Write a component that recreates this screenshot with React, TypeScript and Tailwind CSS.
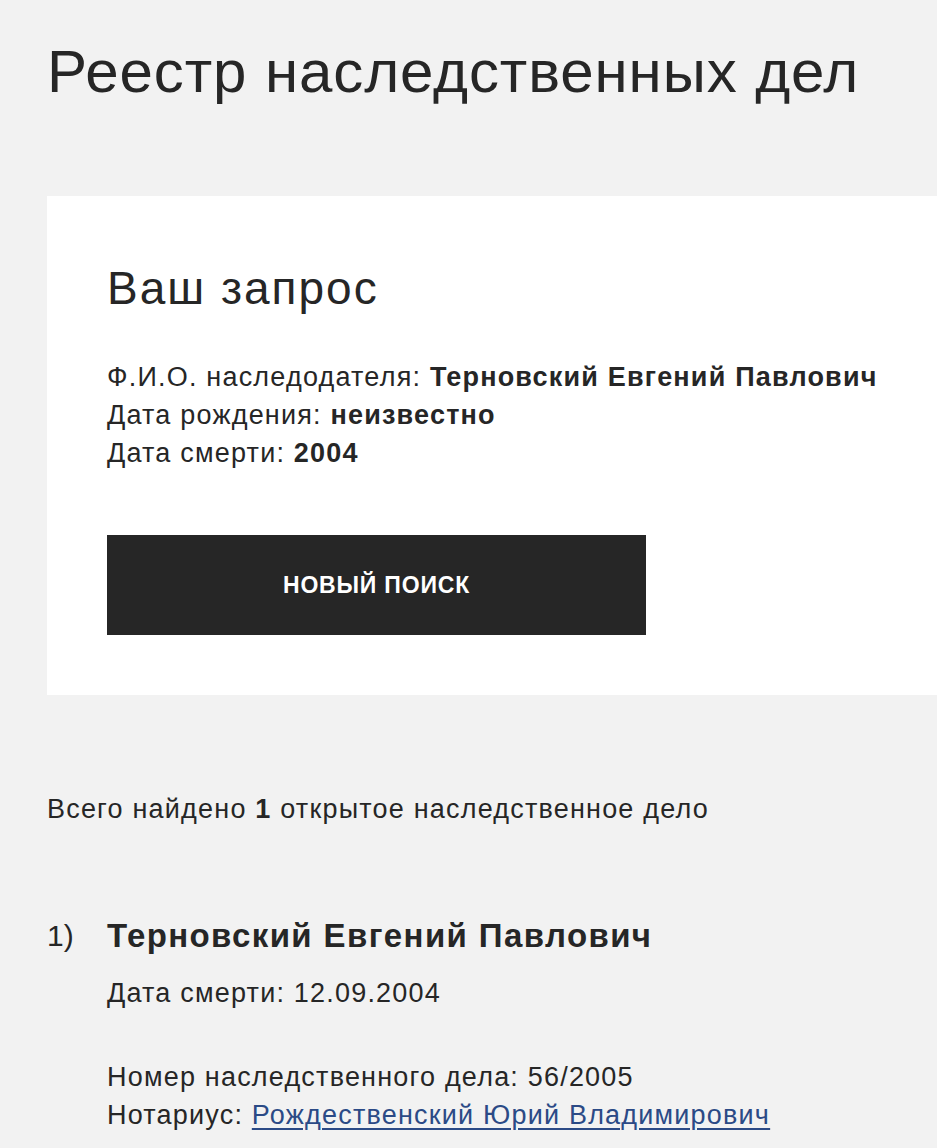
export default function App() {
  return (
    <div className="min-h-[1148px] bg-[#f2f2f2] text-[#262626] overflow-hidden" style={{ fontFamily: '"Liberation Sans", Arial, sans-serif' }}>
      <div className="pl-[47px] pt-[36px]">
        <h1 className="text-[60px] leading-[72px] font-normal whitespace-nowrap tracking-[0.9px]">Реестр наследственных дел</h1>
        <div className="mt-[88px] bg-white pl-[60px] pt-[65px] pb-[60px]">
          <h2 className="text-[46px] leading-[54px] font-normal tracking-[2px]">Ваш запрос</h2>
          <div className="mt-[43px] text-[27px] leading-[38px] tracking-[1.2px] whitespace-nowrap">
            <div>Ф.И.О. наследодателя: <b>Терновский Евгений Павлович</b></div>
            <div>Дата рождения: <b>неизвестно</b></div>
            <div>Дата смерти: <b>2004</b></div>
          </div>
          <button className="mt-[63px] w-[539px] h-[100px] bg-[#262626] text-white text-[23px] font-bold uppercase tracking-[0.8px] flex items-center justify-center">
            Новый поиск
          </button>
        </div>
        <div className="mt-[95px] text-[27px] leading-[38px] tracking-[1.2px] whitespace-nowrap">
          Всего найдено <b>1</b> открытое наследственное дело
        </div>
        <div className="mt-[90px] flex">
          <div className="w-[60px] text-[30px] leading-[36px]">1)</div>
          <div className="whitespace-nowrap">
            <div className="text-[33px] leading-[36px] font-bold tracking-[1.4px]">Терновский Евгений Павлович</div>
            <div className="mt-[20px] text-[27px] leading-[38px] tracking-[1.2px]">Дата смерти: 12.09.2004</div>
            <div className="mt-[46px] text-[27px] leading-[38px] tracking-[1.2px]">
              <div>Номер наследственного дела: 56/2005</div>
              <div>
                Нотариус:{" "}
                <a href="#" className="text-[#2b4a86] underline decoration-2 underline-offset-4">
                  Рождественский Юрий Владимирович
                </a>
              </div>
            </div>
          </div>
        </div>
      </div>
    </div>
  );
}
